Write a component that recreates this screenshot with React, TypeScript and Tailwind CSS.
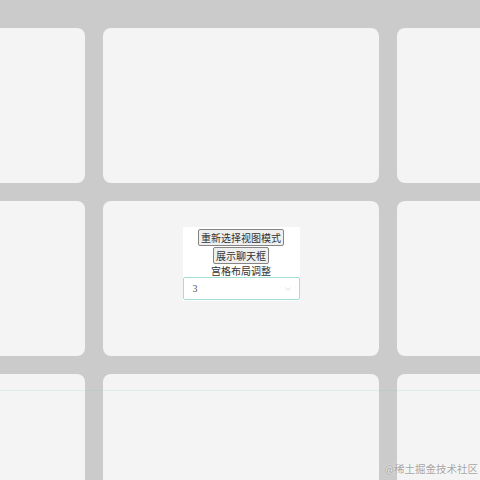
import { ChevronDown } from 'lucide-react';

export default function App() {
  const cells = Array.from({ length: 9 }, (_, i) => i);

  return (
    <div className="relative h-[480px] w-[480px] overflow-hidden bg-[#cbcbcb] font-['Noto_Sans_CJK_SC',sans-serif]">
      <div className="ml-[-191px] grid w-max grid-cols-[276px_276px_276px] auto-rows-[155px] gap-[18px] pt-[28px]">
        {cells.map((i) => (
          <div key={i} className="flex justify-center rounded-[8px] bg-[#f4f4f4]">
            {i === 4 && (
              <div className="mt-[26px] flex h-fit w-[117px] flex-col items-center bg-white pt-[2px] pb-[1px]">
                <button className="rounded-[2px] border border-[#858585] bg-[#efefef] px-[2px] py-px text-[10px] leading-[13px] text-[#333]">
                  重新选择视图模式
                </button>
                <button className="mt-px rounded-[2px] border border-[#858585] bg-[#efefef] px-[2px] py-px text-[10px] leading-[13px] text-[#333]">
                  展示聊天框
                </button>
                <span className="text-[10px] leading-[13px] text-[#333]">宫格布局调整</span>
                <div className="flex h-[23px] w-full items-center justify-between rounded-[2px] border border-[#a4ddd4] bg-white pr-[6px] pl-[9px]">
                  <span className="font-['Liberation_Serif',serif] text-[10px] text-[#555]">3</span>
                  <ChevronDown className="size-[10px] text-[#c4c4c4]" strokeWidth={1.5} />
                </div>
              </div>
            )}
          </div>
        ))}
      </div>

      {/* faint line over the bottom row */}
      <div className="absolute top-[390px] left-0 h-px w-full bg-[#7fd9c8]/20" />

      <span className="absolute right-[2px] bottom-[5px] text-[10.5px] leading-[13px] text-[#a6a6a6] [text-shadow:0_0_2px_#fff]">
        @稀土掘金技术社区
      </span>
    </div>
  );
}
